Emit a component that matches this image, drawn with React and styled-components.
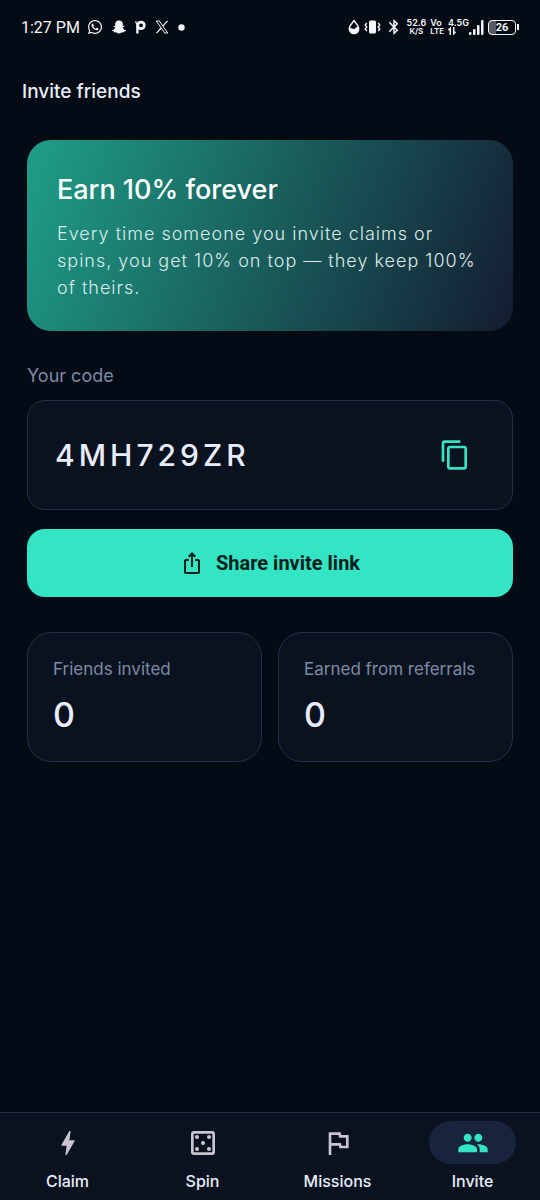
import React, { useState } from "react";
import styled, { createGlobalStyle } from "styled-components";
import {
  MdBluetooth,
  MdBolt,
  MdContentCopy,
  MdIosShare,
  MdOutlineCasino,
  MdOutlineFlag,
  MdPeople,
} from "react-icons/md";
import { FaSnapchatGhost, FaWhatsapp } from "react-icons/fa";

const GlobalStyle = createGlobalStyle`
  * {
    box-sizing: border-box;
  }

  body {
    margin: 0;
    background: #050b14;
    color: #e8edfb;
    font-family: Inter, "Liberation Sans", sans-serif;
  }

  button {
    font-family: inherit;
    border: none;
    cursor: pointer;
  }
`;

const Page = styled.div`
  display: flex;
  flex-direction: column;
  min-height: 100vh;
`;

const StatusBar = styled.div`
  display: flex;
  align-items: center;
  justify-content: space-between;
  height: 54px;
  padding: 0 21px;
  color: #f4f6fa;
  font-family: Roboto, sans-serif;
`;

const StatusGroup = styled.div`
  display: flex;
  align-items: center;
  gap: ${({ $gap }) => $gap}px;
`;

const Clock = styled.span`
  padding-top: 2px;
  font-size: 16px;
  line-height: 20px;
`;

const TinyLabel = styled.span`
  display: flex;
  flex-direction: column;
  align-items: ${({ $align }) => $align || "center"};
  font-family: Inter, sans-serif;
  font-size: 9px;
  font-weight: 600;
  line-height: 8px;
`;

const SmallLine = styled.span`
  font-size: 8px;
`;

const Battery = styled.span`
  display: flex;
  align-items: center;
`;

const BatteryBody = styled.span`
  width: 28px;
  height: 15px;
  border: 1px solid #f4f6fa;
  border-radius: 4px;
  background: linear-gradient(90deg, #565b63 26%, transparent 26%);
  font-size: 11px;
  font-weight: 700;
  line-height: 13px;
  text-align: center;
`;

const BatteryTip = styled.span`
  width: 2px;
  height: 6px;
  margin-left: 1px;
  background: #f4f6fa;
`;

const Header = styled.header`
  padding: 24px 22px 0;
`;

const Title = styled.h1`
  margin: 0;
  font-size: 19px;
  font-weight: 500;
  line-height: 28px;
`;

const Main = styled.main`
  display: flex;
  flex: 1;
  flex-direction: column;
  padding: 34px 27px;
`;

const Banner = styled.section`
  padding: 30px;
  border-radius: 24px;
  background: linear-gradient(111deg, #1f9f87 0%, #141c30 100%);
`;

const BannerTitle = styled.h2`
  margin: 0 0 10px;
  color: #fff;
  font-size: 27px;
  font-weight: 500;
  line-height: 40px;
`;

const BannerText = styled.p`
  margin: 0;
  color: #dcecec;
  font-size: 18px;
  font-weight: 300;
  line-height: 27px;
  letter-spacing: 1px;
`;

const SectionLabel = styled.h3`
  margin: 33px 0 12px;
  color: #7d8aa5;
  font-size: 18px;
  font-weight: 400;
  line-height: 24px;
`;

const CodeBox = styled.div`
  display: flex;
  align-items: center;
  justify-content: space-between;
  padding: 18px 21px 18px 27px;
  border: 1px solid #22304a;
  border-radius: 18px;
  background: #0b121f;
`;

const Code = styled.span`
  font-size: 30px;
  font-weight: 500;
  letter-spacing: 4px;
`;

const IconButton = styled.button`
  display: flex;
  align-items: center;
  justify-content: center;
  width: 72px;
  height: 72px;
  padding: 0;
  background: transparent;
  color: #34e5c5;
`;

const ShareButton = styled.button`
  display: flex;
  align-items: center;
  justify-content: center;
  gap: 12px;
  height: 68px;
  margin: 19px 0 35px;
  border-radius: 18px;
  background: #34e5c5;
  color: #052019;
  font-family: Roboto, sans-serif;
  font-size: 20px;
  font-weight: 700;
`;

const Stats = styled.div`
  display: grid;
  grid-template-columns: 1fr 1fr;
  gap: 16px;
`;

const StatCard = styled.div`
  padding: 24px 25px;
  border: 1px solid #22304a;
  border-radius: 24px;
  background: #0b121f;
`;

const StatLabel = styled.div`
  color: #7d8aa5;
  font-size: 17px;
  line-height: 24px;
`;

const StatValue = styled.div`
  margin-top: 12px;
  font-size: 34px;
  font-weight: 500;
  line-height: 44px;
`;

const NavBar = styled.nav`
  position: sticky;
  bottom: 0;
  display: flex;
  padding: 8px 0;
  border-top: 1px solid #22304a;
  background: #0b121f;
`;

const NavItem = styled.button`
  display: flex;
  flex: 1;
  flex-direction: column;
  align-items: center;
  gap: 6px;
  padding: 0;
  background: transparent;
  color: #e8edfb;
  font-size: 16px;
  font-weight: 500;
  line-height: 22px;
`;

const NavPill = styled.span`
  display: flex;
  align-items: center;
  justify-content: center;
  width: 87px;
  height: 43px;
  border-radius: 22px;
  background: ${({ $active }) => ($active ? "#18243d" : "transparent")};
  color: ${({ $active }) => ($active ? "#34e5c5" : "#cac4d0")};
`;

const stats = [
  { label: "Friends invited", value: 0 },
  { label: "Earned from referrals", value: 0 },
];

const tabs = [
  { name: "Claim", Icon: MdBolt },
  { name: "Spin", Icon: MdOutlineCasino },
  { name: "Missions", Icon: MdOutlineFlag },
  { name: "Invite", Icon: MdPeople },
];

const PIcon = () => (
  <svg width="11" height="14" viewBox="0 0 11 14" fill="none" stroke="currentColor">
    <path d="M2.4 3.5v10" strokeWidth="2.4" />
    <path d="M.8 1.2c0 2 1.200 2.600 2.400 2.300" strokeWidth="1.4" />
    <circle cx="6" cy="5.4" r="3.300" strokeWidth="2.800" />
  </svg>
);

const XIcon = () => (
  <svg width="14" height="14" viewBox="0 0 13 14" fill="none" stroke="currentColor">
    <path d="M.8 1h3l8.4 12h-3z" />
    <path d="M12 .8 7.3 6.1M5.7 8 1 13.2" strokeWidth="1.2" />
  </svg>
);

const DropIcon = () => (
  <svg width="12" height="16" viewBox="0 0 12 16">
    <path
      d="M6 1.6C4.2 4 1.3 6.8 1.3 9.8a4.7 4.7 0 0 0 9.4 0C10.7 6.8 7.8 4 6 1.6z"
      fill="none"
      stroke="currentColor"
      strokeWidth="1.5"
    />
    <path d="M1.3 9.5c1.9-1.3 3.2.8 4.9.4 1.7-.5 2.4-2.3 4.3-2l.2 2a4.7 4.7 0 0 1-9.4 0z" fill="currentColor" />
  </svg>
);

const VibrateIcon = () => (
  <svg width="17" height="14" viewBox="0 0 17 14" fill="none" stroke="currentColor">
    <rect x="5" y="0.5" width="7" height="13" rx="1.5" fill="currentColor" stroke="none" />
    <path d="M2.8 3 1.2 5l1.6 2-1.6 2 1.6 2M14.2 3l1.6 2-1.6 2 1.6 2-1.6 2" strokeWidth="1.4" />
  </svg>
);

const DataArrows = () => (
  <svg width="8" height="8" viewBox="0 0 7 7" fill="none" stroke="currentColor">
    <path d="M2 7V1.2L.4 2.8M5 0v5.8l1.6-1.6" strokeWidth="1.3" />
  </svg>
);

const SignalIcon = () => (
  <svg width="15" height="15" viewBox="0 0 15 15" fill="currentColor">
    <rect x="0" y="12" width="2.5" height="3" rx="1" />
    <rect x="4" y="9" width="2.5" height="6" rx="1" />
    <rect x="8" y="5" width="2.5" height="10" rx="1" />
    <rect x="12" y="0" width="2.5" height="15" rx="1" />
  </svg>
);

const DotIcon = () => (
  <svg width="7" height="7" viewBox="0 0 7 7" fill="currentColor">
    <circle cx="3.5" cy="3.5" r="3.2" />
  </svg>
);

export default function App() {
  const [activeTab, setActiveTab] = useState("Invite");

  const copyCode = () => {
    navigator.clipboard?.writeText("4MH729ZR").catch((err) => console.log(err));
  };

  return (
    <Page>
      <GlobalStyle />

      <StatusBar>
        <StatusGroup $gap={7}>
          <Clock>1:27 PM</Clock>
          <StatusGroup $gap={9}>
            <FaWhatsapp size={16} />
            <FaSnapchatGhost size={14} />
            <PIcon />
            <XIcon />
            <DotIcon />
          </StatusGroup>
        </StatusGroup>
        <StatusGroup $gap={4}>
          <DropIcon />
          <VibrateIcon />
          <MdBluetooth size={18} />
          <TinyLabel>
            <span>52.6</span>
            <SmallLine>K/S</SmallLine>
          </TinyLabel>
          <TinyLabel $align="flex-start">
            <span>Vo</span>
            <SmallLine>LTE</SmallLine>
          </TinyLabel>
          <StatusGroup $gap={0}>
            <TinyLabel $align="flex-start">
              <span>4.5G</span>
              <DataArrows />
            </TinyLabel>
            <SignalIcon />
          </StatusGroup>
          <Battery>
            <BatteryBody>26</BatteryBody>
            <BatteryTip />
          </Battery>
        </StatusGroup>
      </StatusBar>

      <Header>
        <Title>Invite friends</Title>
      </Header>

      <Main>
        <Banner>
          <BannerTitle>Earn 10% forever</BannerTitle>
          <BannerText>
            Every time someone you invite claims or spins, you get 10% on top — they keep 100% of theirs.
          </BannerText>
        </Banner>

        <SectionLabel>Your code</SectionLabel>
        <CodeBox>
          <Code>4MH729ZR</Code>
          <IconButton aria-label="Copy code" onClick={copyCode}>
            <MdContentCopy size={32} />
          </IconButton>
        </CodeBox>

        <ShareButton>
          <MdIosShare size={24} />
          Share invite link
        </ShareButton>

        <Stats>
          {stats.map((stat) => (
            <StatCard key={stat.label}>
              <StatLabel>{stat.label}</StatLabel>
              <StatValue>{stat.value}</StatValue>
            </StatCard>
          ))}
        </Stats>
      </Main>

      <NavBar>
        {tabs.map(({ name, Icon }) => (
          <NavItem key={name} onClick={() => setActiveTab(name)}>
            <NavPill $active={activeTab === name}>
              <Icon size={32} />
            </NavPill>
            {name}
          </NavItem>
        ))}
      </NavBar>
    </Page>
  );
}
